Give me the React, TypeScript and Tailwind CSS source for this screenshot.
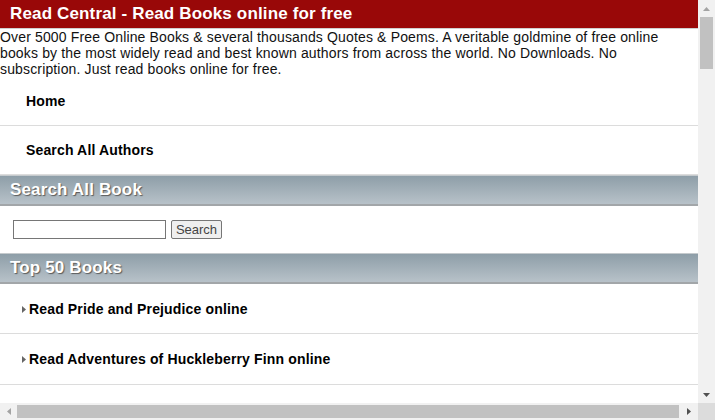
const NAV = ["Home", "Search All Authors"];

const BOOKS = [
  { title: "Read Pride and Prejudice online", h: "h-[50px]" },
  { title: "Read Adventures of Huckleberry Finn online", h: "h-[51px]" },
];

function SectionHeader({ title }: { title: string }) {
  return (
    <div className="h-[31px] border-t border-t-[#c5cacd] border-b-2 border-b-[#a2a6a9] bg-gradient-to-b from-[#8e9ea8] to-[#b8c2c9] pl-[10px] flex items-center">
      <span className="text-[17px] font-bold text-white [text-shadow:1px_1px_1px_#5a5a5a]">{title}</span>
    </div>
  );
}

function Arrow({ dir, fill = "#a3a3a3" }: { dir: "up" | "down" | "left" | "right"; fill?: string }) {
  const pts = {
    up: "0,4 7,4 3.5,0",
    down: "0,0 7,0 3.5,4",
    left: "4,0 4,7 0,3.5",
    right: "0,0 0,7 4,3.5",
  }[dir];
  const vertical = dir === "up" || dir === "down";
  return (
    <svg width={vertical ? 7 : 4} height={vertical ? 4 : 7} viewBox={vertical ? "0 0 7 4" : "0 0 4 7"}>
      <polygon points={pts} fill={fill} />
    </svg>
  );
}

export default function App() {
  return (
    <div className="w-[715px] h-[420px] flex flex-col overflow-hidden bg-white tracking-[0.15px] font-['Liberation_Sans',Arial,sans-serif]">
      <div className="flex flex-1 min-h-0">
        {/* page content */}
        <div className="flex-1 min-w-0 overflow-hidden">
          <div className="h-[29px] bg-[#990808] border-b border-b-[#cfcfcf] pl-[10px] flex items-center">
            <h1 className="text-[17px] font-bold text-white leading-none pb-[1px]">
              Read Central - Read Books online for free
            </h1>
          </div>
          <p className="text-[14px] leading-[16px] text-[#111]">
            Over 5000 Free Online Books &amp; several thousands Quotes &amp; Poems. A veritable goldmine of free online
            books by the most widely read and best known authors from across the world. No Downloads. No
            subscription. Just read books online for free.
          </p>

          <ul>
            {NAV.map((item) => (
              <li key={item} className="h-[49px] border-b border-b-[#dcdcdc] pl-[26px] flex items-center">
                <a className="text-[14px] font-bold text-black">{item}</a>
              </li>
            ))}
          </ul>

          <SectionHeader title="Search All Book" />
          <div className="h-[47px] pl-[13px] flex items-center gap-[5px]">
            <input
              type="text"
              className="w-[153px] h-[19px] border border-[#767676] bg-white outline-none"
            />
            <button className="w-[51px] h-[19px] border border-[#767676] rounded-[2px] bg-[#efefef] text-[13px] leading-none text-[#444] tracking-normal">
              Search
            </button>
          </div>

          <SectionHeader title="Top 50 Books" />
          <ul>
            {BOOKS.map((b) => (
              <li key={b.title} className={`${b.h} border-b border-b-[#dcdcdc] pl-[22px] pt-[1px] flex items-center`}>
                <span className="mr-[3px]">
                  <Arrow dir="right" fill="#666" />
                </span>
                <a className="text-[14px] font-bold text-black">{b.title}</a>
              </li>
            ))}
          </ul>
        </div>

        {/* vertical scrollbar */}
        <div className="w-[17px] bg-[#f1f1f1] flex flex-col">
          <div className="h-[17px] flex items-center justify-center">
            <Arrow dir="up" />
          </div>
          <div className="mx-[2px] h-[52px] bg-[#c1c1c1]" />
          <div className="flex-1" />
          <div className="h-[17px] flex items-center justify-center">
            <Arrow dir="down" fill="#505050" />
          </div>
        </div>
      </div>

      {/* horizontal scrollbar */}
      <div className="h-[17px] flex">
        <div className="flex-1 bg-[#f1f1f1] flex items-center">
          <div className="w-[17px] flex items-center justify-center">
            <Arrow dir="left" />
          </div>
          <div className="w-[662px] h-[13px] bg-[#c1c1c1]" />
          <div className="flex-1 flex items-center justify-center">
            <Arrow dir="right" fill="#505050" />
          </div>
        </div>
        <div className="w-[17px] bg-[#dcdcdc]" />
      </div>
    </div>
  );
}
